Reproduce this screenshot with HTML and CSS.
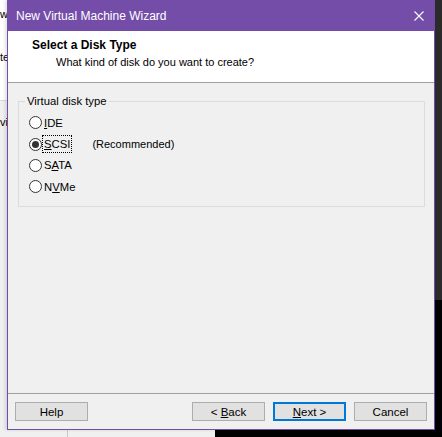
FILE: index.html
```html
<!DOCTYPE html>
<html>
<head>
<meta charset="utf-8">
<link rel="stylesheet" href="styles.css">
</head>
<body>
<div class="desktop">
  <div class="bgwin">
    <div class="bg-top">
      <span class="frag f1">w</span>
      <span class="frag f2">te</span>
    </div>
    <div class="bg-mid">
      <span class="frag f3">vi</span>
    </div>
    <div class="bg-bottom">
      <div class="bg-col"></div>
    </div>
  </div>
  <div class="rightstrip"></div>

  <div class="dialog">
    <div class="titlebar">
      <span class="title">New Virtual Machine Wizard</span>
      <svg class="close" width="10" height="10" viewBox="0 0 10 10">
        <path d="M0.5 0.5 L9.5 9.5 M9.5 0.5 L0.5 9.5" stroke="#fff" stroke-width="1.1" fill="none"/>
      </svg>
    </div>
    <div class="header">
      <div class="h-title">Select a Disk Type</div>
      <div class="h-sub">What kind of disk do you want to create?</div>
    </div>
    <div class="content">
      <div class="group">
        <div class="legend">Virtual disk type</div>
        <div class="radios">
          <div class="radio-row"><span class="radio"></span><span class="label"><u>I</u>DE</span></div>
          <div class="radio-row"><span class="radio checked"></span><span class="label focus"><u>S</u>CSI</span><span class="rec">(Recommended)</span></div>
          <div class="radio-row"><span class="radio"></span><span class="label">S<u>A</u>TA</span></div>
          <div class="radio-row"><span class="radio"></span><span class="label">N<u>V</u>Me</span></div>
        </div>
      </div>
    </div>
    <div class="footer">
      <button class="btn">Help</button>
      <div class="spacer"></div>
      <button class="btn">&lt; <u>B</u>ack</button>
      <button class="btn default"><u>N</u>ext &gt;</button>
      <button class="btn">Cancel</button>
    </div>
  </div>
</div>
</body>
</html>
```

FILE: styles.css
```css
* { box-sizing: border-box; }
html, body { margin: 0; padding: 0; }
body {
  width: 442px;
  height: 437px;
  overflow: hidden;
  background: #000;
  font-family: "Liberation Sans", Arial, sans-serif;
  font-size: 11px;
  color: #000;
}
.desktop {
  position: relative;
  width: 442px;
  height: 437px;
  background: #000;
}
.bgwin {
  position: absolute;
  left: 0;
  top: 0;
  width: 215px;
  height: 437px;
  display: flex;
  flex-direction: column;
  background: #f0f0f0;
}
.bg-top {
  position: relative;
  height: 101px;
  background: #fff;
  border-bottom: 1px solid #d9d9d9;
}
.bg-mid {
  position: relative;
  flex: 1;
  background: #f0f0f0;
}
.bg-bottom {
  height: 0;
}
.bg-col {
  position: absolute;
  left: 67px;
  top: 420px;
  width: 1px;
  height: 20px;
  background: #c8c8c8;
}
.frag {
  position: absolute;
  left: 0;
  font-size: 11px;
  color: #000;
  line-height: 14px;
}
.f1 { top: 7px; }
.f2 { top: 50px; }
.f3 { top: 14px; }
.rightstrip {
  position: absolute;
  left: 435px;
  top: 0;
  width: 7px;
  height: 300px;
  background: #2b2b2b;
}
.dialog {
  position: absolute;
  left: 7px;
  top: 0;
  width: 428px;
  height: 430px;
  border: 1px solid #744da9;
  border-top: none;
  background: #f0f0f0;
  display: flex;
  flex-direction: column;
  box-shadow: -2px 0 3px rgba(0,0,0,0.12);
}
.titlebar {
  height: 31px;
  background: #744da9;
  display: flex;
  align-items: center;
  padding: 0 10px 0 8px;
  color: #fff;
}
.title {
  flex: 1;
  font-size: 12px;
}
.close { margin-right: 0; }
.header {
  height: 52px;
  background: #fff;
  border-bottom: 1px solid #a0a0a0;
  padding: 7px 0 0 24px;
}
.h-title {
  font-weight: bold;
  font-size: 12px;
  line-height: 15px;
}
.h-sub {
  padding-left: 24px;
  line-height: 16px;
  margin-top: 1px;
  font-size: 11px;
}
.content {
  flex: 1;
  padding: 18px 9px 0 10px;
  border-bottom: 1px solid #a0a0a0;
}
.group {
  position: relative;
  height: 106px;
  border: 1px solid #dcdcdc;
  padding: 10px 0 0 10px;
}
.legend {
  position: absolute;
  left: 6px;
  top: -8px;
  background: #f0f0f0;
  padding: 0 2px 0 2px;
  line-height: 14px;
  font-size: 11.3px;
}
.radios {
  display: flex;
  flex-direction: column;
}
.radio-row {
  height: 21.4px;
  display: flex;
  align-items: center;
  font-size: 11.3px;
}
.radio {
  width: 13px;
  height: 13px;
  border-radius: 50%;
  border: 1px solid #333;
  background: #fff;
  display: flex;
  align-items: center;
  justify-content: center;
  margin-right: 0;
}
.radio.checked::after {
  content: "";
  width: 7px;
  height: 7px;
  border-radius: 50%;
  background: #333;
}
.label {
  padding: 1px 1px;
  border: 1px dotted transparent;
  line-height: 14px;
}
.label.focus { border-color: #000; }
.rec {
  margin-left: 20px;
  font-size: 11px;
}
.footer {
  height: 35px;
  display: flex;
  align-items: flex-start;
  padding: 8px 7px 0 7px;
  gap: 8px;
}
.spacer { flex: 1; }
.btn {
  font-family: "Liberation Sans", Arial, sans-serif;
  font-size: 11.5px;
  color: #000;
  width: 73px;
  height: 19px;
  background: #e1e1e1;
  border: 1px solid #adadad;
  padding: 0;
  margin: 0;
  line-height: 16px;
}
.btn.default {
  border: 2px solid #0078d7;
}
```
